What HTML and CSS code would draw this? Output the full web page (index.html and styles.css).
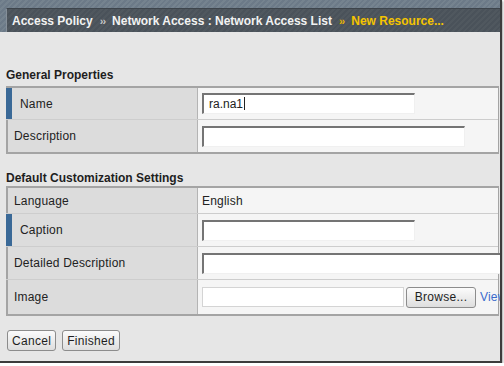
FILE: index.html
```html
<!DOCTYPE html>
<html lang="en">
<head>
    <meta charset="UTF-8">
    <title>New Resource - Network Access List</title>
    <link rel="stylesheet" href="styles.css">
</head>
<body>

    <div class="frame">
        <div class="topbar">
            <div class="crumbs">
                <span>Access Policy</span>
                <span class="sep">&rsaquo;&rsaquo;</span>
                <span>Network Access : Network Access List</span>
                <span class="sep sep-current">&rsaquo;&rsaquo;</span>
                <span class="current">New Resource...</span>
            </div>
        </div>

        <div class="content">
            <h3 class="section-title first">General Properties</h3>
            <div class="props">
                <div class="row row-tall">
                    <div class="label req">Name</div>
                    <div class="value"><input type="text" class="field field-short" value="ra.na1"><span class="caret"></span></div>
                </div>
                <div class="row row-tall last">
                    <div class="label">Description</div>
                    <div class="value"><input type="text" class="field field-mid"></div>
                </div>
            </div>

            <h3 class="section-title">Default Customization Settings</h3>
            <div class="props">
                <div class="row row-short">
                    <div class="label">Language</div>
                    <div class="value">English</div>
                </div>
                <div class="row row-tall">
                    <div class="label req">Caption</div>
                    <div class="value"><input type="text" class="field field-short"></div>
                </div>
                <div class="row row-tall">
                    <div class="label">Detailed Description</div>
                    <div class="value"><input type="text" class="field field-long"></div>
                </div>
                <div class="row row-image last">
                    <div class="label">Image</div>
                    <div class="value">
                        <input type="text" class="file-path">
                        <button type="button" class="btn btn-browse">Browse...</button>
                        <a href="#" class="view-link">View</a>
                    </div>
                </div>
            </div>

            <div class="actions">
                <button type="button" class="btn">Cancel</button>
                <button type="button" class="btn">Finished</button>
            </div>
        </div>
    </div>

</body>
</html>
```

FILE: styles.css
```css
body {
    margin: 0;
    background: #ffffff;
    font-family: "Liberation Sans", Arial, sans-serif;
    font-size: 12px;
    color: #222;
}
.frame {
    width: 500px;
    height: 361px;
    background: #e6e6e6;
    border-right: 2px solid #3c3c3c;
    border-bottom: 2px solid #3c3c3c;
    box-shadow: 1px 1px 2px rgba(0, 0, 0, 0.35);
    overflow: hidden;
}
.topbar {
    padding: 8px 0 0 6px;
    background: repeating-linear-gradient(135deg, #6c7a88 0 2px, #75838f 2px 4px);
}
.crumbs {
    height: 23px;
    display: flex;
    align-items: center;
    gap: 6px;
    padding-left: 5px;
    border-top: 1px solid #3d444b;
    border-left: 1px solid #858f99;
    background: repeating-linear-gradient(135deg, #4a525a 0 2px, #50585f 2px 4px);
    color: #f2f2f2;
    font-weight: bold;
    font-size: 12px;
    white-space: nowrap;
}
.sep {
    font-size: 11px;
    color: #c8c8c8;
    padding: 0 1px;
    letter-spacing: -1px;
}
.sep-current {
    color: #e8b400;
}
.current {
    color: #f5c400;
}
.content {
    padding: 0 1px 0 6px;
}
.section-title {
    margin: 16px 0 0;
    font-size: 12px;
    line-height: 16px;
    color: #1e1e1e;
}
.section-title.first {
    margin-top: 35px;
    margin-bottom: 3px;
}
.props {
    border-top: 2px solid #a4a4a4;
    border-right: 1px solid #a4a4a4;
    border-bottom: 2px solid #a4a4a4;
    background: #f5f5f5;
}
.row {
    display: grid;
    grid-template-columns: 192px 1fr;
    border-bottom: 1px solid #cdcdcd;
}
.row.last {
    border-bottom: none;
}
.row-tall {
    height: 32px;
}
.row-short {
    height: 25px;
}
.row-image {
    height: 34px;
}
.props .row:first-child.row-tall {
    height: 31px;
}
.label {
    display: flex;
    align-items: center;
    padding-left: 6px;
    border-left: 2px solid #a4a4a4;
    border-right: 1px solid #b4b4b4;
    background: #dcdcdc;
    letter-spacing: 0.2px;
}
.label.req {
    padding-left: 8px;
    border-left: 6px solid #3a6997;
}
.value {
    display: flex;
    align-items: center;
    padding-left: 4px;
    letter-spacing: 0.2px;
    white-space: nowrap;
}
.field {
    box-sizing: border-box;
    height: 21px;
    padding: 0 5px;
    border-top: 2px solid #747474;
    border-left: 2px solid #747474;
    border-right: 1px solid #f0f0f0;
    border-bottom: 1px solid #f0f0f0;
    background: #fff;
    font-family: "Liberation Sans", Arial, sans-serif;
    font-size: 12px;
    color: #222;
    outline: none;
}
.field-short {
    width: 213px;
}
.field-mid {
    width: 263px;
}
.field-long {
    width: 320px;
}
.caret {
    width: 1px;
    height: 13px;
    background: #222;
    margin-left: -171px;
}
.file-path {
    box-sizing: border-box;
    width: 202px;
    height: 20px;
    border: 1px solid #d4d4d4;
    background: #fff;
}
.btn {
    height: 21px;
    padding: 0 4px;
    border: 1px solid #8c8c8c;
    border-radius: 3px;
    background: linear-gradient(#fbfbfb, #dedede);
    font-family: "Liberation Sans", Arial, sans-serif;
    font-size: 12px;
    letter-spacing: 0.3px;
    color: #1e1e1e;
    cursor: pointer;
}
.btn-browse {
    width: 70px;
    margin-left: 2px;
}
.view-link {
    margin-left: 4px;
    color: #3a6acc;
    text-decoration: none;
}
.actions {
    display: flex;
    gap: 6px;
    margin-top: 14px;
    padding-left: 1px;
}
```
